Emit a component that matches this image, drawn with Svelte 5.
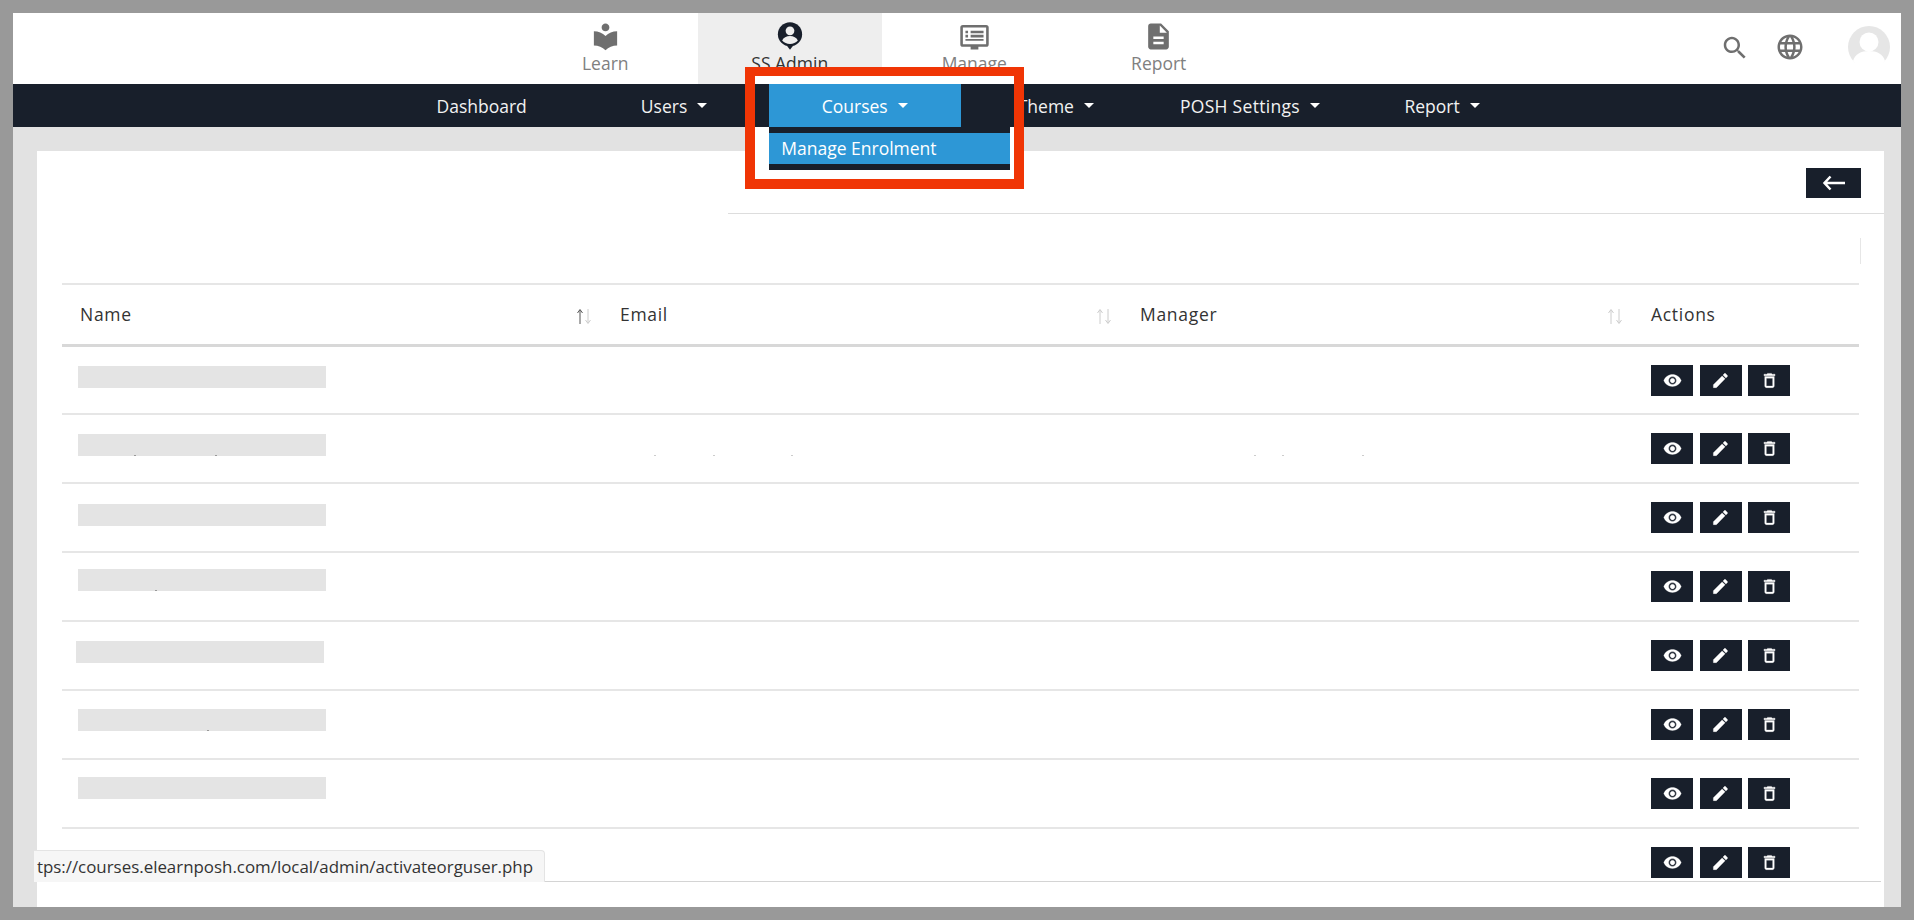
<script>
	const icons = {
		learn: 'M12 11.55C9.64 9.35 6.48 8 3 8v11c3.48 0 6.64 1.35 9 3.55 2.36-2.19 5.52-3.55 9-3.55V8c-3.48 0-6.64 1.35-9 3.55zM12 8c1.66 0 3-1.34 3-3s-1.34-3-3-3-3 1.34-3 3 1.34 3 3 3z',
		report: 'M14 2H6c-1.1 0-2 .9-2 2v16c0 1.1.9 2 2 2h12c1.1 0 2-.9 2-2V8l-6-6zm2 16H8v-2h8v2zm0-4H8v-2h8v2zm-3-5V3.5L18.5 9H13z',
		search: 'M15.5 14h-.79l-.28-.27C15.41 12.59 16 11.11 16 9.5 16 5.91 13.09 3 9.5 3S3 5.91 3 9.5 5.91 16 9.5 16c1.61 0 3.09-.59 4.23-1.57l.27.28v.79l5 4.99L20.49 19l-4.99-5zm-6 0C7.01 14 5 11.99 5 9.5S7.01 5 9.5 5 14 7.01 14 9.5 11.99 14 9.5 14z',
		globe: 'M11.99 2C6.47 2 2 6.48 2 12s4.47 10 9.99 10C17.52 22 22 17.52 22 12S17.52 2 11.99 2zm6.93 6h-2.95c-.32-1.25-.78-2.45-1.38-3.56 1.84.63 3.37 1.91 4.33 3.56zM12 4.04c.83 1.2 1.48 2.53 1.91 3.96h-3.82c.43-1.43 1.08-2.76 1.91-3.96zM4.26 14C4.1 13.36 4 12.69 4 12s.1-1.36.26-2h3.38c-.08.66-.14 1.32-.14 2 0 .68.06 1.34.14 2H4.26zm.82 2h2.95c.32 1.25.78 2.45 1.38 3.56-1.84-.63-3.37-1.9-4.33-3.56zm2.95-8H5.08c.96-1.66 2.49-2.93 4.33-3.56C8.81 5.55 8.35 6.75 8.03 8zM12 19.96c-.83-1.2-1.48-2.53-1.91-3.96h3.82c-.43 1.43-1.08 2.76-1.91 3.96zM14.34 14H9.66c-.09-.66-.16-1.32-.16-2 0-.68.07-1.35.16-2h4.68c.09.65.16 1.32.16 2 0 .68-.07 1.34-.16 2zm.25 5.56c.6-1.11 1.06-2.31 1.38-3.56h2.95c-.96 1.65-2.49 2.93-4.33 3.56zM16.36 14c.08-.66.14-1.32.14-2 0-.68-.06-1.34-.14-2h3.38c.16.64.26 1.31.26 2s-.1 1.36-.26 2h-3.38z',
		eye: 'M12 4.5C7 4.5 2.73 7.61 1 12c1.73 4.39 6 7.5 11 7.5s9.27-3.11 11-7.5c-1.73-4.39-6-7.5-11-7.5zM12 17c-2.76 0-5-2.24-5-5s2.24-5 5-5 5 2.24 5 5-2.24 5-5 5zm0-8c-1.66 0-3 1.34-3 3s1.34 3 3 3 3-1.34 3-3-1.34-3-3-3z',
		edit: 'M3 17.25V21h3.75L17.81 9.94l-3.75-3.75L3 17.25zM20.71 7.04c.39-.39.39-1.02 0-1.41l-2.34-2.34c-.39-.39-1.02-.39-1.41 0l-1.83 1.83 3.75 3.75 1.83-1.83z',
		trash: 'M6 19c0 1.1.9 2 2 2h8c1.1 0 2-.9 2-2V7H6v12zM8 9h8v10H8V9zm7.5-5l-1-1h-5l-1 1H5v2h14V4z'
	};

	const navItems = [
		{ label: 'Dashboard', wide: true },
		{ label: 'Users', caret: true, wide: true },
		{ label: 'Courses', caret: true, wide: true, active: true },
		{ label: 'Theme', caret: true },
		{ label: 'POSH Settings', caret: true },
		{ label: 'Report', caret: true }
	];

	const columns = [
		{ label: 'Name', sorted: true },
		{ label: 'Email' },
		{ label: 'Manager' }
	];

	// bar = top offset of the redaction block, specks = bits of text left under it
	const rows = [
		{ bar: 19 },
		{ bar: 19, specks: [56, 137], emailSpecks: [52, 111, 189], managerSpecks: [132, 160, 240] },
		{ bar: 20 },
		{ bar: 16, specks: [77] },
		{ bar: 19, left: -2 },
		{ bar: 18, specks: [129] },
		{ bar: 17 },
		{ last: true }
	];
</script>

<div class="frame">
	<div class="screen">
		<header class="topbar">
			<nav class="tabs">
				<div class="tab">
					<svg class="tab-icon" viewBox="0 0 24 24"><path d={icons.learn} /></svg>
					<span>Learn</span>
				</div>
				<div class="tab tab-active">
					<svg class="tab-icon" viewBox="0 0 24 26">
						<circle cx="12" cy="11.5" r="10.5" />
						<path d="M9 21h6l-3 4z" />
						<circle class="cut" cx="12" cy="8.5" r="3.8" />
						<path class="cut" d="M5.2 17c1-2.6 3.8-3.9 6.8-3.9s5.800 1.300 6.800 3.900c-1.700 1.900-4.100 3-6.800 3s-5.100-1.100-6.800-3z" />
					</svg>
					<span>SS Admin</span>
				</div>
				<div class="tab">
					<svg class="tab-icon" viewBox="0 0 24 24">
						<path d="M3 3h18a2 2 0 0 1 2 2v13a2 2 0 0 1-2 2h-6v2H9v-2H3a2 2 0 0 1-2-2V5a2 2 0 0 1 2-2zm0 2v13h18V5H3z" />
						<path d="M5 7.500h2v2H5zM9 7.500h10v2H9zM5 10.700h2v2H5zM9 10.700h10v2H9zM5 13.900h14v1.400H5z" />
					</svg>
					<span>Manage</span>
				</div>
				<div class="tab">
					<svg class="tab-icon" viewBox="0 0 24 24"><path d={icons.report} /></svg>
					<span>Report</span>
				</div>
			</nav>
			<div class="tools">
				<svg class="search" viewBox="0 0 24 24"><path d={icons.search} /></svg>
				<svg class="globe" viewBox="0 0 24 24"><path d={icons.globe} /></svg>
				<svg class="avatar" viewBox="0 0 42 42">
					<circle cx="21" cy="21" r="21" fill="#e6e6e6" />
					<circle cx="21" cy="16" r="9.500" fill="#fff" />
					<path d="M5 35c2-7 8-10 16-10s14 3 16 10c-4 5-10 8-16 8S9 40 5 35z" fill="#fff" />
				</svg>
			</div>
		</header>

		<nav class="menu">
			{#each navItems as item}
				<div class="menu-item" class:wide={item.wide} class:active={item.active}>
					{item.label}
					{#if item.caret}<span class="caret"></span>{/if}
					{#if item.active}
						<div class="dropdown"><div class="dropdown-link">Manage Enrolment</div></div>
					{/if}
				</div>
			{/each}
		</nav>

		<main class="content">
			<section class="card">
				<div class="card-head">
					<button class="back" aria-label="Back">
						<svg viewBox="0 0 24 16" width="24" height="16">
							<path d="M23 8H2.500M8.500 1.500 2.500 8l6 6.500" fill="none" stroke="#fff" stroke-width="2.500" />
						</svg>
					</button>
				</div>
				<div class="head-rule"></div>
				<div class="filter-row"></div>

				<table class="users">
					<colgroup>
						<col class="col-name" />
						<col class="col-email" />
						<col class="col-manager" />
						<col />
					</colgroup>
					<thead>
						<tr>
							{#each columns as col}
								<th>
									<div class="th-inner">
										{col.label}
										<svg class="sort" class:sorted={col.sorted} viewBox="0 0 18 18" width="18" height="18">
											<path class="up" d="M5 17V3M2.500 6 5 2.500 7.500 6" />
											<path class="down" d="M13 2v14M10.500 13 13 16.500 15.500 13" />
										</svg>
									</div>
								</th>
							{/each}
							<th>Actions</th>
						</tr>
					</thead>
					<tbody>
						{#each rows as row}
							<tr class:last={row.last}>
								<td>
									{#if !row.last}
										<div class="bar" style="margin-top: {row.bar}px; margin-left: {row.left ?? 0}px"></div>
										{#each row.specks ?? [] as x}
											<i class="speck dark" style="left: {x + 16}px; top: {row.bar + 21}px"></i>
										{/each}
									{/if}
								</td>
								<td>
									{#each row.emailSpecks ?? [] as x}
										<i class="speck" style="left: {x}px; top: {row.bar + 21}px"></i>
									{/each}
								</td>
								<td>
									{#each row.managerSpecks ?? [] as x}
										<i class="speck" style="left: {x}px; top: {row.bar + 21}px"></i>
									{/each}
								</td>
								<td class="actions">
									<div class="btn-row">
										<button aria-label="View"><svg viewBox="0 0 24 24"><path d={icons.eye} /></svg></button>
										<button aria-label="Edit"><svg viewBox="0 0 24 24"><path d={icons.edit} /></svg></button>
										<button aria-label="Delete"><svg viewBox="0 0 24 24"><path d={icons.trash} /></svg></button>
									</div>
								</td>
							</tr>
						{/each}
					</tbody>
				</table>
				<div class="card-foot"></div>
			</section>
		</main>

		<div class="callout">
			<div class="callout-top"></div>
			<div class="callout-gap"></div>
			<div class="callout-low"></div>
		</div>

		<div class="status"><div class="status-text">https://courses.elearnposh.com/local/admin/activateorguser.php</div></div>
	</div>
</div>

<style>
	:global(body) {
		background: #999;
		font-family: 'Open Sans', 'Liberation Sans', sans-serif;
	}
	.frame {
		box-sizing: border-box;
		height: 920px;
		padding: 13px;
		overflow: hidden;
	}
	.screen {
		position: relative;
		height: 894px;
		background: #e2e2e2;
		overflow: hidden;
	}

	.topbar {
		display: flex;
		justify-content: space-between;
		height: 71px;
		background: #fff;
	}
	.tabs {
		display: flex;
		margin-left: 500px;
	}
	.tab {
		width: 184.500px;
		display: flex;
		flex-direction: column;
		align-items: center;
		padding-top: 8px;
		box-sizing: border-box;
		color: #808080;
		font-size: 17.500px;
		line-height: 20px;
	}
	.tab-icon {
		width: 31px;
		height: 31px;
		fill: #6f6f6f;
		margin-bottom: 1px;
	}
	.tab-active {
		background: #eee;
		color: #333;
	}
	.tab-active .tab-icon {
		width: 28px;
		height: 30px;
		margin-bottom: 2px;
		fill: #181f2b;
	}
	.tab-active .cut {
		fill: #eee;
	}
	.tools {
		display: flex;
		align-items: center;
		padding-right: 11px;
	}
	.search {
		width: 30px;
		height: 30px;
		fill: #6f6f6f;
		margin-right: 25px;
		margin-top: -2px;
	}
	.globe {
		width: 30px;
		height: 30px;
		fill: #6f6f6f;
		margin-right: 43px;
		margin-top: -3px;
	}
	.avatar {
		width: 42px;
		height: 42px;
		margin-top: -4px;
	}

	.menu {
		display: flex;
		height: 43px;
		padding-left: 371.500px;
		background: #181f2b;
	}
	.menu-item {
		position: relative;
		display: flex;
		align-items: center;
		gap: 10px;
		padding: 0 36px;
		margin-right: 10px;
		color: #f2f2f2;
		font-size: 17.500px;
	}
	.menu-item:nth-child(4) {
		margin-right: 14px;
	}
	.menu-item:nth-child(5) {
		letter-spacing: 0.3px;
		margin-right: 12.500px;
	}
	.menu-item.wide {
		padding: 0 52px;
	}
	.menu-item.active {
		padding: 0 53px 0 52.500px;
		background: #2d97d6;
		color: #fff;
		margin-right: 21px;
	}
	.caret {
		width: 0;
		height: 0;
		border-left: 5px solid transparent;
		border-right: 5px solid transparent;
		border-top: 5px solid #fff;
	}
	.dropdown {
		position: absolute;
		z-index: 5;
		top: 43px;
		left: 0;
		width: 241px;
		padding: 6px 0;
		background: #181f2b;
	}
	.dropdown-link {
		height: 31px;
		line-height: 31px;
		padding-left: 12px;
		background: #2d97d6;
		color: #fff;
		font-size: 17.500px;
	}

	.content {
		padding: 24px 17px 0 24px;
	}
	.card {
		background: #fff;
		height: 756px;
	}
	.card-head {
		display: flex;
		justify-content: flex-end;
		height: 62px;
		padding: 17px 23px 0 0;
		box-sizing: border-box;
	}
	.back {
		width: 55px;
		height: 30px;
		padding: 0;
		border: 0;
		background: #181f2b;
		display: flex;
		align-items: center;
		justify-content: center;
	}
	.head-rule {
		height: 1px;
		margin-left: 691px;
		background: #ddd;
	}
	.filter-row {
		height: 26px;
		margin-top: 24px;
		margin-right: 23px;
		border-right: 1px solid #e6e6e6;
		margin-bottom: 19px;
	}

	.users {
		width: 1797px;
		margin-left: 25px;
		border-collapse: collapse;
		table-layout: fixed;
		color: #333;
		font-size: 17.500px;
		letter-spacing: 0.7px;
	}
	.col-name {
		width: 540px;
	}
	.col-email {
		width: 520px;
	}
	.col-manager {
		width: 511px;
	}
	th {
		height: 61px;
		padding: 0 18px;
		border-top: 2px solid #e6e6e6;
		border-bottom: 3px solid #d8d8d8;
		font-weight: 400;
		text-align: left;
		box-sizing: border-box;
	}
	.th-inner {
		display: flex;
		justify-content: space-between;
		align-items: center;
	}
	.sort {
		margin-right: -9px;
		margin-top: 4px;
		fill: none;
		stroke: #ccc;
		stroke-width: 1;
	}
	.sort.sorted .up {
		stroke: #555;
	}
	td {
		position: relative;
		height: 69px;
		padding: 0 16px;
		border-bottom: 2px solid #e6e6e6;
		vertical-align: top;
		box-sizing: border-box;
	}
	tr.last td {
		height: 53px;
		border-bottom: 0;
	}
	.bar {
		width: 248px;
		height: 22px;
		background: #e4e4e4;
	}
	.speck {
		position: absolute;
		width: 2px;
		height: 1px;
		background: #ccc;
	}
	.speck.dark {
		background: #999;
	}
	.actions {
		padding: 18px 0 0 18px;
	}
	.btn-row {
		display: flex;
		gap: 6.500px;
	}
	.btn-row button {
		width: 42px;
		height: 31px;
		padding: 0;
		border: 0;
		background: #181f2b;
		display: flex;
		align-items: center;
		justify-content: center;
	}
	.btn-row button svg {
		width: 19px;
		height: 19px;
		fill: #fff;
		stroke: #fff;
		stroke-width: 0.4;
	}
	.card-foot {
		height: 1px;
		margin-right: 3px;
		background: #d4d4d4;
	}

	.callout {
		position: absolute;
		z-index: 3;
		top: 54px;
		left: 732px;
		width: 279px;
		height: 122px;
		box-sizing: border-box;
		border: 9px solid #f03505;
		border-width: 9px 10px 10px 10px;
		display: flex;
		flex-direction: column;
	}
	.callout-top {
		height: 8px;
		background: #fff;
	}
	.callout-gap {
		height: 43px;
	}
	.callout-low {
		flex: 1;
		background: #fff;
	}

	.status {
		position: absolute;
		z-index: 4;
		left: 21px;
		top: 837px;
		width: 511px;
		height: 32px;
		box-sizing: border-box;
		padding-left: 3px;
		background: #f6f6f6;
		border-top: 1px solid #e4e4e4;
		border-right: 1px solid #e4e4e4;
		border-radius: 0 4px 0 0;
		color: #333;
		font-size: 16.900px;
		line-height: 31px;
	}
	.status-text {
		overflow: hidden;
		white-space: nowrap;
		text-indent: -16.500px;
	}
</style>
